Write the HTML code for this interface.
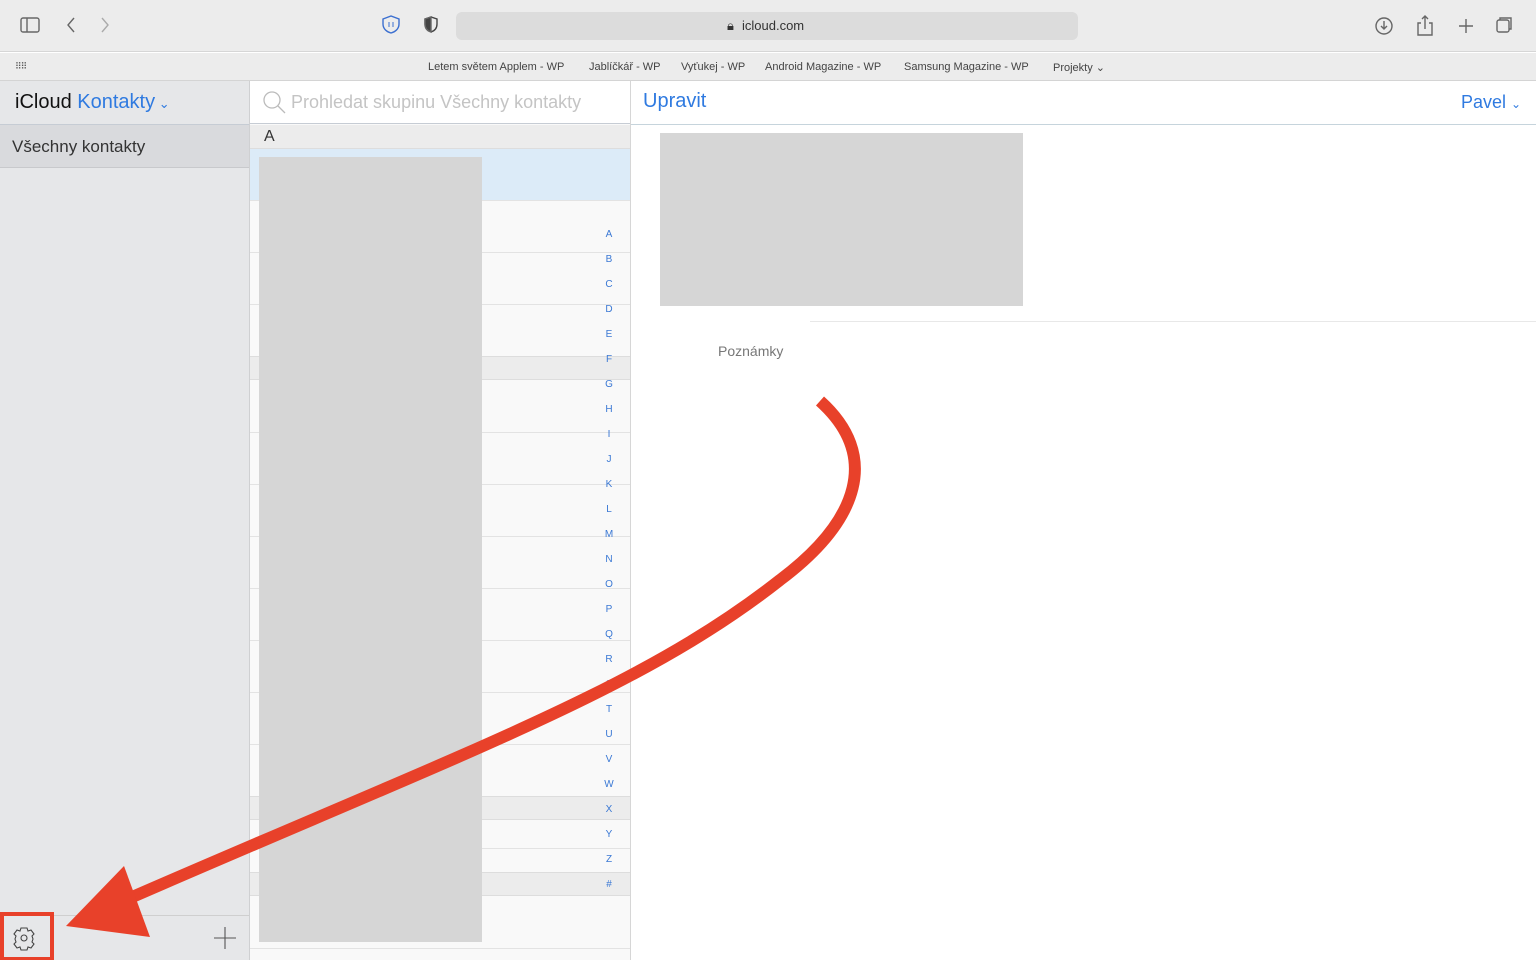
<!DOCTYPE html>
<html><head><meta charset="utf-8"><style>
*{margin:0;padding:0;box-sizing:border-box}
body{width:1536px;height:960px;overflow:hidden;position:relative;background:#fff;font-family:"Liberation Sans",sans-serif}
.a{position:absolute}
.bm{font-size:11px;color:#444;top:61px}
.idx{position:absolute;left:600px;width:18px;text-align:center;font-size:10px;color:#3a78d4}
.ln{position:absolute;left:250px;width:380px;height:1px;background:#e3e3e3}
.sh{position:absolute;left:250px;width:380px;height:24px;background:#ececec;border-top:1px solid #ddd;border-bottom:1px solid #ddd}
</style></head><body>
<!-- toolbar -->
<div class="a" style="left:0;top:0;width:1536px;height:52px;background:#ececec;border-bottom:1px solid #d6d6d6"></div>
<svg class="a" style="left:0;top:0" width="1536" height="52" fill="none" stroke="#666" stroke-width="1.4">
<rect x="21" y="18" width="18" height="14" rx="2"/><line x1="27" y1="18" x2="27" y2="32"/>
<path d="M74 18l-6 7 6 7"/><path d="M102 18l6 7-6 7" stroke="#aaa"/>
<path d="M383 19l8-3 8 3v5c0 5-4 8-8 9-4-1-8-4-8-9z" stroke="#3b6fd0"/><path d="M389 22v5M393 22v5" stroke="#3b6fd0" stroke-width="1"/>
<path d="M425 19l6-2 6 2v5c0 5-3 7-6 8-3-1-6-3-6-8z" stroke="#444"/><path d="M431 17v15l0 0c-3-1-6-3-6-8v-5z" fill="#444"/>
<path d="M1071 25a6 6 0 1 1-3-5" stroke="#888" stroke-width="1.1"/>
<circle cx="1384" cy="26" r="8"/><path d="M1384 21v8M1381 26l3 3 3-3"/>
<path d="M1421 23h-3v12h14v-12h-3M1425 29v-13M1422 19l3-3 3 3"/>
<path d="M1466 19v14M1459 26h14"/>
<rect x="1497" y="20" width="12" height="12" rx="2"/><path d="M1500 20v-2h11v11h-2"/>
</svg>
<div class="a" style="left:456px;top:12px;width:622px;height:28px;background:#dcdcdc;border-radius:6px"></div>
<div class="a" style="left:727px;top:18px;font-size:13px;color:#333">&#128274;&#xFE0E;</div>
<div class="a" style="left:742px;top:18px;font-size:13px;color:#333">icloud.com</div>
<!-- bookmarks -->
<div class="a" style="left:0;top:53px;width:1536px;height:28px;background:#ececec;border-bottom:1px solid #d4d4d4"></div>
<div class="a" style="left:15px;top:61px;font-size:9px;color:#555;letter-spacing:-1px">⠿⠿</div>
<div class="a bm" style="left:428px">Letem světem Applem - WP</div>
<div class="a bm" style="left:589px">Jablíčkář - WP</div>
<div class="a bm" style="left:681px">Vyťukej - WP</div>
<div class="a bm" style="left:765px">Android Magazine - WP</div>
<div class="a bm" style="left:904px">Samsung Magazine - WP</div>
<div class="a bm" style="left:1053px">Projekty ⌄</div>
<!-- sidebar -->
<div class="a" style="left:0;top:81px;width:250px;height:879px;background:#e6e7e9;border-right:1px solid #cfd0d2"></div>
<div class="a" style="left:0;top:124px;width:249px;height:1px;background:#c6ccd4"></div>
<div class="a" style="left:15px;top:91px;font-size:20px;color:#111">iCloud <span style="color:#2f7ae0">Kontakty</span><span style="color:#2f7ae0;font-size:13px"> ⌄</span></div>
<div class="a" style="left:0;top:125px;width:249px;height:43px;background:#d9dadd;border-bottom:1px solid #c8c9cc"></div>
<div class="a" style="left:12px;top:137px;font-size:17px;color:#333">Všechny kontakty</div>
<div class="a" style="left:0;top:915px;width:249px;height:1px;background:#cfcfcf"></div>
<svg class="a" style="left:0;top:910px" width="250" height="50" fill="none" stroke="#444" stroke-width="1.1">
<circle cx="24" cy="28" r="3"/><path d="M21 18h6l1 3 3-1 3 4-2 2 1 3-1 3 2 2-3 4-3-1-1 3h-6l-1-3-3 1-3-4 2-2-1-3 1-3-2-2 3-4 3 1z"/>
<path d="M225 17v22M214 28h22" stroke="#555"/>
<rect x="2" y="4" width="50" height="45" stroke="#e8412a" stroke-width="4"/>
</svg>
<!-- list column -->
<div class="a" style="left:250px;top:81px;width:381px;height:879px;background:#f9f9f9;border-right:1px solid #d6d6d6"></div>
<div class="a" style="left:250px;top:81px;width:380px;height:43px;background:#fff;border-bottom:1px solid #c6ccd4"></div>
<svg class="a" style="left:262px;top:90px" width="26" height="26" fill="none" stroke="#bbb" stroke-width="1.3"><circle cx="10" cy="10" r="8"/><path d="M16 16l7 7"/></svg>
<div class="a" style="left:291px;top:92px;font-size:18px;color:#c4c4c4">Prohledat skupinu Všechny kontakty</div>
<div class="a" style="left:250px;top:125px;width:380px;height:24px;background:#ececec;border-bottom:1px solid #ddd"></div>
<div class="a" style="left:264px;top:128px;font-size:16px;color:#333">A</div>
<div class="a" style="left:250px;top:149px;width:380px;height:51px;background:#dcebf8"></div>
<div class="ln" style="top:200px"></div><div class="ln" style="top:252px"></div><div class="ln" style="top:304px"></div>
<div class="sh" style="top:356px"></div>
<div class="ln" style="top:432px"></div><div class="ln" style="top:484px"></div><div class="ln" style="top:536px"></div><div class="ln" style="top:588px"></div><div class="ln" style="top:640px"></div><div class="ln" style="top:692px"></div><div class="ln" style="top:744px"></div>
<div class="sh" style="top:796px"></div>
<div class="ln" style="top:848px"></div>
<div class="sh" style="top:872px"></div>
<div class="ln" style="top:948px"></div>
<div class="a" style="left:259px;top:157px;width:223px;height:785px;background:#d6d6d6"></div>
<div class="idx" style="top:229px">A</div><div class="idx" style="top:254px">B</div><div class="idx" style="top:279px">C</div><div class="idx" style="top:304px">D</div><div class="idx" style="top:329px">E</div><div class="idx" style="top:354px">F</div><div class="idx" style="top:379px">G</div><div class="idx" style="top:404px">H</div><div class="idx" style="top:429px">I</div><div class="idx" style="top:454px">J</div><div class="idx" style="top:479px">K</div><div class="idx" style="top:504px">L</div><div class="idx" style="top:529px">M</div><div class="idx" style="top:554px">N</div><div class="idx" style="top:579px">O</div><div class="idx" style="top:604px">P</div><div class="idx" style="top:629px">Q</div><div class="idx" style="top:654px">R</div><div class="idx" style="top:679px">S</div><div class="idx" style="top:704px">T</div><div class="idx" style="top:729px">U</div><div class="idx" style="top:754px">V</div><div class="idx" style="top:779px">W</div><div class="idx" style="top:804px">X</div><div class="idx" style="top:829px">Y</div><div class="idx" style="top:854px">Z</div><div class="idx" style="top:879px">#</div>
<!-- detail -->
<div class="a" style="left:631px;top:124px;width:905px;height:1px;background:#c6d4dc"></div>
<div class="a" style="left:643px;top:90px;font-size:20px;color:#2f7ae0">Upravit</div>
<div class="a" style="left:1461px;top:92px;font-size:18px;color:#2f7ae0">Pavel <span style="font-size:12px">⌄</span></div>
<div class="a" style="left:660px;top:133px;width:363px;height:173px;background:#d6d6d6"></div>
<div class="a" style="left:810px;top:321px;width:726px;height:1px;background:#e8e8e8"></div>
<div class="a" style="left:718px;top:343px;font-size:14px;color:#777">Poznámky</div>
<!-- arrow -->
<svg class="a" style="left:0;top:0" width="1536" height="960">
<path d="M820 401C880 455 860 520 780 580C640 690 470 750 130 898" fill="none" stroke="#e8412a" stroke-width="12"/>
<path d="M124 866L66 926L150 937Z" fill="#e8412a"/>
</svg>
</body></html>
